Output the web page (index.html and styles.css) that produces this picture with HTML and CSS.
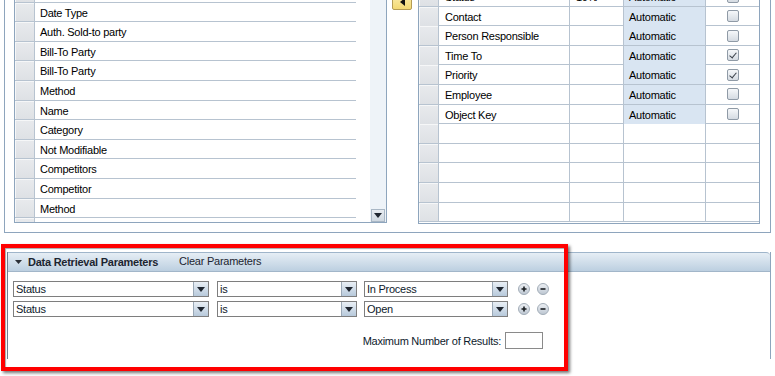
FILE: index.html
```html
<!DOCTYPE html>
<html lang="en">
<head>
    <meta charset="UTF-8">
    <meta name="viewport" content="width=device-width, initial-scale=1.0">
    <title>Data Retrieval Parameters</title>
    <link rel="stylesheet" href="styles.css">
</head>
<body>
    <div class="workarea">
        <div class="field-list">
            <div class="field-rows">
                <div class="field-row"><div class="row-head"></div><div class="row-text"></div></div>
                <div class="field-row"><div class="row-head"></div><div class="row-text">Date Type</div></div>
                <div class="field-row"><div class="row-head"></div><div class="row-text">Auth. Sold-to party</div></div>
                <div class="field-row"><div class="row-head"></div><div class="row-text">Bill-To Party</div></div>
                <div class="field-row"><div class="row-head"></div><div class="row-text">Bill-To Party</div></div>
                <div class="field-row"><div class="row-head"></div><div class="row-text">Method</div></div>
                <div class="field-row"><div class="row-head"></div><div class="row-text">Name</div></div>
                <div class="field-row"><div class="row-head"></div><div class="row-text">Category</div></div>
                <div class="field-row"><div class="row-head"></div><div class="row-text">Not Modifiable</div></div>
                <div class="field-row"><div class="row-head"></div><div class="row-text">Competitors</div></div>
                <div class="field-row"><div class="row-head"></div><div class="row-text">Competitor</div></div>
                <div class="field-row"><div class="row-head"></div><div class="row-text">Method</div></div>
                <div class="field-row"><div class="row-head"></div><div class="row-text"></div></div>
            </div>
            <div class="list-gap"></div>
            <div class="scrollbar">
                <div class="scroll-btn">
                    <svg width="8" height="5" viewBox="0 0 8 5"><path d="M0 0h8L4 5z" fill="#1f2630"/></svg>
                </div>
            </div>
        </div>

        <div class="mover">
            <div class="move-btn">
                <svg width="5" height="8" viewBox="0 0 5 8"><path d="M5 0v8L0 4z" fill="#111"/></svg>
            </div>
        </div>

        <div class="selected">
            <div class="selected-rows">
                <div class="sel-row"><div class="row-head"></div><div class="cell">Status</div><div class="cell">10%</div><div class="cell auto">Automatic</div><div class="cell check"><span class="checkbox"></span></div></div>
                <div class="sel-row"><div class="row-head"></div><div class="cell">Contact</div><div class="cell"></div><div class="cell auto">Automatic</div><div class="cell check"><span class="checkbox"></span></div></div>
                <div class="sel-row"><div class="row-head"></div><div class="cell">Person Responsible</div><div class="cell"></div><div class="cell auto">Automatic</div><div class="cell check"><span class="checkbox"></span></div></div>
                <div class="sel-row"><div class="row-head"></div><div class="cell">Time To</div><div class="cell"></div><div class="cell auto">Automatic</div><div class="cell check"><span class="checkbox checked"></span></div></div>
                <div class="sel-row"><div class="row-head"></div><div class="cell">Priority</div><div class="cell"></div><div class="cell auto">Automatic</div><div class="cell check"><span class="checkbox checked"></span></div></div>
                <div class="sel-row"><div class="row-head"></div><div class="cell">Employee</div><div class="cell"></div><div class="cell auto">Automatic</div><div class="cell check"><span class="checkbox"></span></div></div>
                <div class="sel-row"><div class="row-head"></div><div class="cell">Object Key</div><div class="cell"></div><div class="cell auto">Automatic</div><div class="cell check"><span class="checkbox"></span></div></div>
                <div class="sel-row"><div class="row-head"></div><div class="cell"></div><div class="cell"></div><div class="cell"></div><div class="cell check"></div></div>
                <div class="sel-row"><div class="row-head"></div><div class="cell"></div><div class="cell"></div><div class="cell"></div><div class="cell check"></div></div>
                <div class="sel-row"><div class="row-head"></div><div class="cell"></div><div class="cell"></div><div class="cell"></div><div class="cell check"></div></div>
                <div class="sel-row"><div class="row-head"></div><div class="cell"></div><div class="cell"></div><div class="cell"></div><div class="cell check"></div></div>
                <div class="sel-row"><div class="row-head"></div><div class="cell"></div><div class="cell"></div><div class="cell"></div><div class="cell check"></div></div>
            </div>
        </div>
    </div>

    <div class="params">
        <div class="params-head">
            <svg class="toggle" width="7" height="4" viewBox="0 0 7 4"><path d="M0 0h7L3.5 4z" fill="#2b2f36"/></svg>
            <span class="params-title">Data Retrieval Parameters</span>
            <span class="params-link">Clear Parameters</span>
        </div>
        <div class="params-body">
            <div class="filter-row">
                <div class="select field"><span class="select-value">Status</span><span class="select-btn"><svg width="8" height="5" viewBox="0 0 8 5"><path d="M0 0h8L4 5z" fill="#1f2630"/></svg></span></div>
                <div class="select operator"><span class="select-value">is</span><span class="select-btn"><svg width="8" height="5" viewBox="0 0 8 5"><path d="M0 0h8L4 5z" fill="#1f2630"/></svg></span></div>
                <div class="select value"><span class="select-value">In Process</span><span class="select-btn"><svg width="8" height="5" viewBox="0 0 8 5"><path d="M0 0h8L4 5z" fill="#1f2630"/></svg></span></div>
                <svg class="round-btn plus" width="12" height="12" viewBox="0 0 12 12"><circle cx="6" cy="6" r="5.5" fill="url(#rb)" stroke="#a3adb8"/><path d="M3.5 6h5M6 3.5v5" stroke="#1b1e22" stroke-width="1.6"/></svg>
                <svg class="round-btn" width="12" height="12" viewBox="0 0 12 12"><circle cx="6" cy="6" r="5.5" fill="url(#rb)" stroke="#a3adb8"/><path d="M3.5 6h5" stroke="#1b1e22" stroke-width="1.6"/></svg>
            </div>
            <div class="filter-row">
                <div class="select field"><span class="select-value">Status</span><span class="select-btn"><svg width="8" height="5" viewBox="0 0 8 5"><path d="M0 0h8L4 5z" fill="#1f2630"/></svg></span></div>
                <div class="select operator"><span class="select-value">is</span><span class="select-btn"><svg width="8" height="5" viewBox="0 0 8 5"><path d="M0 0h8L4 5z" fill="#1f2630"/></svg></span></div>
                <div class="select value"><span class="select-value">Open</span><span class="select-btn"><svg width="8" height="5" viewBox="0 0 8 5"><path d="M0 0h8L4 5z" fill="#1f2630"/></svg></span></div>
                <svg class="round-btn plus" width="12" height="12" viewBox="0 0 12 12"><circle cx="6" cy="6" r="5.5" fill="url(#rb)" stroke="#a3adb8"/><path d="M3.5 6h5M6 3.5v5" stroke="#1b1e22" stroke-width="1.6"/></svg>
                <svg class="round-btn" width="12" height="12" viewBox="0 0 12 12"><circle cx="6" cy="6" r="5.5" fill="url(#rb)" stroke="#a3adb8"/><path d="M3.5 6h5" stroke="#1b1e22" stroke-width="1.6"/></svg>
            </div>
            <div class="max-row">
                <label for="maxResults">Maximum Number of Results:</label>
                <input id="maxResults" class="max-input" type="text">
            </div>
        </div>
    </div>

    <div class="highlight"></div>

    <svg width="0" height="0" class="defs">
        <defs>
            <linearGradient id="rb" x1="0" y1="0" x2="0" y2="1">
                <stop offset="0" stop-color="#eef1f5"/>
                <stop offset="1" stop-color="#bcc6d1"/>
            </linearGradient>
        </defs>
    </svg>
</body>
</html>
```

FILE: styles.css
```css
* {
    box-sizing: border-box;
}

body {
    margin: 0;
    width: 775px;
    height: 376px;
    overflow: hidden;
    position: relative;
    font-family: "Liberation Sans", Arial, sans-serif;
    font-size: 11px;
    letter-spacing: -0.25px;
    color: #000;
    background-color: #fff;
}

/* top area: field list + selected fields */
.workarea {
    display: flex;
    margin-left: 4px;
    width: 767px;
    height: 233px;
    padding-left: 9px;
    border: 1px solid #8ea5bd;
    border-top: none;
}

.field-list {
    display: flex;
    width: 373px;
    height: 223px;
    overflow: hidden;
    border: 1px solid #8ea5bd;
    border-top: none;
}

.field-rows {
    width: 341px;
    margin-top: -17px;
}

.field-row {
    display: flex;
    height: 19.6px;
    border-bottom: 1px solid #b7c3d0;
}

.row-head {
    width: 20px;
    flex-shrink: 0;
    background: linear-gradient(#e8eaed, #dee1e5);
    border-right: 1px solid #b7c3d0;
    box-shadow: inset 1px 1px 0 #f6f7f8;
}

.row-text {
    padding: 1px 0 0 5px;
    line-height: 18px;
}

.list-gap {
    width: 14px;
}

.scrollbar {
    width: 16px;
    display: flex;
    flex-direction: column;
    justify-content: flex-end;
    padding: 0 1px;
    background-color: #eef3f8;
}

.scroll-btn {
    height: 13px;
    display: flex;
    align-items: center;
    justify-content: center;
    background: linear-gradient(#e7ecf1, #cfd8e1);
    border: 1px solid #a9b7c5;
}

.mover {
    width: 31px;
}

.move-btn {
    width: 20px;
    height: 17px;
    margin: -7px 0 0 5px;
    display: flex;
    align-items: center;
    justify-content: center;
    background: linear-gradient(#fbeeb0, #f3d974);
    border: 1px solid #b49c55;
    border-radius: 2px;
}

.selected {
    width: 342px;
    height: 224px;
    overflow: hidden;
    border: 1px solid #8ea5bd;
    border-top: none;
}

.selected-rows {
    margin-top: -13px;
}

.sel-row {
    display: grid;
    grid-template-columns: 20px 131px 54px 82px 53px;
    height: 19.6px;
    border-bottom: 1px solid #b7c3d0;
}

.cell {
    padding: 1px 0 0 6px;
    line-height: 18px;
    border-right: 1px solid #b7c3d0;
    white-space: nowrap;
}

.cell.auto {
    padding-left: 5px;
    background-color: #d9e5f2;
}

.cell.check {
    border-right: none;
    padding: 0;
    display: flex;
    align-items: center;
    justify-content: center;
}

.checkbox {
    width: 12px;
    height: 12px;
    border: 1px solid #8f9aa6;
    border-radius: 2px;
    background: linear-gradient(#f6f8fa, #d5dbe2);
    position: relative;
}

.checkbox.checked::after {
    content: "";
    position: absolute;
    left: 3px;
    top: 1px;
    width: 3px;
    height: 6px;
    border: solid #3a4049;
    border-width: 0 1.5px 1.5px 0;
    transform: rotate(40deg);
}

/* data retrieval parameters panel */
.params {
    margin: 19px 0 0 7px;
    width: 764px;
    height: 107px;
    border-left: 1px solid #6f7f90;
    border-right: 1px solid #8ea5bd;
}

.params-head {
    display: flex;
    align-items: center;
    height: 20px;
    padding-left: 7px;
    background: linear-gradient(#e6eef5, #bccfe0);
    border-top: 1px solid #9fb5ca;
    border-bottom: 1px solid #a2b6c9;
    border-top-right-radius: 4px;
}

.toggle {
    margin-right: 6px;
}

.params-title {
    font-weight: bold;
    color: #1c2530;
}

.params-link {
    margin-left: 21px;
    margin-top: -2px;
    color: #1c2530;
}

.params-body {
    padding: 9px 0 0 5px;
}

.filter-row {
    display: flex;
    align-items: center;
    height: 16px;
    margin-bottom: 4px;
}

.select {
    display: flex;
    height: 16px;
    margin-right: 8px;
    border: 1px solid #7e7e7e;
    background-color: #fff;
}

.select.field {
    width: 196px;
}

.select.operator {
    width: 140px;
    margin-right: 7px;
}

.select.value {
    width: 144px;
    margin-right: 10px;
}

.select-value {
    flex: 1;
    padding-left: 2px;
    line-height: 14px;
    color: #0e1a2c;
}

.select-btn {
    width: 15px;
    display: flex;
    align-items: center;
    justify-content: center;
    border-left: 1px solid #9aa8b6;
    background: linear-gradient(#e9eff5, #b7c9db);
}

.round-btn.plus {
    margin-right: 7px;
}

.max-row {
    display: flex;
    align-items: center;
    justify-content: flex-end;
    gap: 4px;
    width: 530px;
    margin-top: 15px;
    color: #0e1a2c;
}

.max-input {
    width: 38px;
    height: 17px;
    border: 1px solid #8a8a8a;
    padding: 0;
}

/* red annotation frame drawn over the screenshot */
.highlight {
    position: absolute;
    left: 1px;
    top: 244px;
    width: 567px;
    height: 127px;
    border: 4px solid #ff0000;
    box-shadow: 2px 2px 3px rgba(0, 0, 0, 0.55), inset 1px 1px 1px rgba(0, 0, 0, 0.35);
    pointer-events: none;
}

.defs {
    position: absolute;
}
```
